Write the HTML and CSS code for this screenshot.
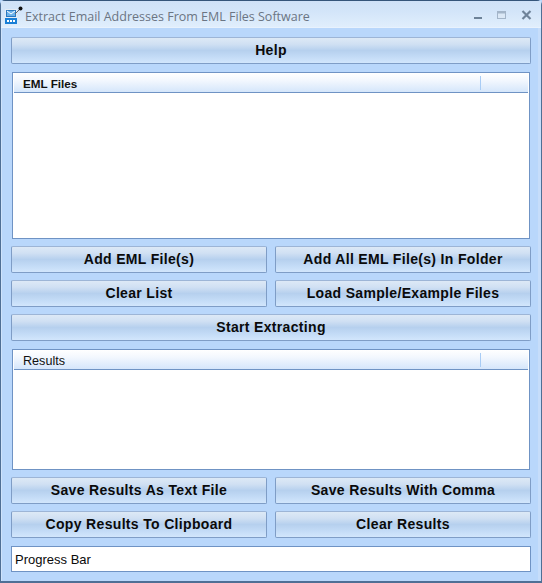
FILE: index.html
```html
<!DOCTYPE html>
<html lang="en">
<head>
    <meta charset="UTF-8">
    <title>Extract Email Addresses From EML Files Software</title>
    <link rel="stylesheet" href="styles.css">
</head>
<body>
    <div class="window">
        <div class="title-bar">
            <svg class="app-icon" width="18" height="20" viewBox="0 0 18 20">
                <rect x="0" y="4" width="12" height="15" fill="#e4ebf4"/>
                <rect x="0" y="13" width="12" height="6" fill="#1a7fd6"/>
                <rect x="1.500" y="5.500" width="9" height="6" fill="#6db2ea" stroke="#2a78c0"/>
                <path d="M2 6l4 3 4-3" fill="none" stroke="#fff"/>
                <path d="M2 16h8" stroke="#fff" stroke-width="2" stroke-dasharray="2 1"/>
                <path d="M10 9l5-5" stroke="#666" stroke-width="1"/>
                <circle cx="15.500" cy="3.500" r="2" fill="#111"/>
            </svg>
            <span class="title-text">Extract Email Addresses From EML Files Software</span>
            <div class="window-controls">
                <svg width="10" height="10" viewBox="0 0 10 10"><rect x="1" y="7" width="8" height="2" fill="#6d8298"/></svg>
                <svg width="10" height="10" viewBox="0 0 10 10"><rect x="0.500" y="1.500" width="8" height="7" fill="#dbe8f6" stroke="#a3b5c9"/><rect x="0.500" y="1.500" width="8" height="2" fill="#a3b5c9"/></svg>
                <svg width="11" height="10" viewBox="0 0 11 10"><path d="M1.500 1l8 8M9.500 1l-8 8" stroke="#6f8399" stroke-width="2.200"/></svg>
            </div>
        </div>

        <div class="client">
            <button class="btn">Help</button>

            <div class="list-box list-files">
                <div class="list-header">
                    <span class="col-name col-bold">EML Files</span>
                </div>
            </div>

            <div class="btn-row">
                <button class="btn">Add EML File(s)</button>
                <button class="btn">Add All EML File(s) In Folder</button>
            </div>
            <div class="btn-row">
                <button class="btn">Clear List</button>
                <button class="btn">Load Sample/Example Files</button>
            </div>
            <button class="btn">Start Extracting</button>

            <div class="list-box list-results">
                <div class="list-header">
                    <span class="col-name">Results</span>
                </div>
            </div>

            <div class="btn-row">
                <button class="btn">Save Results As Text File</button>
                <button class="btn">Save Results With Comma</button>
            </div>
            <div class="btn-row">
                <button class="btn">Copy Results To Clipboard</button>
                <button class="btn">Clear Results</button>
            </div>

            <div class="progress">Progress Bar</div>
        </div>
    </div>
</body>
</html>
```

FILE: styles.css
```css
* {
    box-sizing: border-box;
    margin: 0;
    padding: 0;
}

body {
    width: 542px;
    height: 583px;
    overflow: hidden;
    background-color: #b9d7fb;
    font-family: "Liberation Sans", Arial, sans-serif;
}

.window {
    height: 583px;
    display: flex;
    flex-direction: column;
    border: 1px solid #4f6f95;
    border-top-color: #35557a;
    border-bottom-width: 2px;
    border-radius: 5px 5px 0 0;
    background-color: #b9d7fb;
}

.title-bar {
    height: 27px;
    flex-shrink: 0;
    display: flex;
    align-items: center;
    padding: 5px 0 0 4px;
    background: linear-gradient(to bottom, #cfe1f7 0%, #d3e5f9 40%, #e0eefc 100%);
    border-bottom: 1px solid #e8f2fd;
}

.app-icon {
    margin-right: 2px;
    margin-top: -3px;
}

.title-text {
    font-family: "Open Sans", sans-serif;
    font-size: 12.5px;
    color: #6b7583;
}

.window-controls {
    margin-left: auto;
    margin-top: -3px;
    display: flex;
    align-items: center;
    gap: 14px;
    padding-right: 9px;
}

.client {
    flex: 1;
    display: flex;
    flex-direction: column;
    padding: 9px 7px 0 9px;
    border-left: 1px solid #cfe3fb;
    border-right: 3px solid #c6ddfa;
}

.btn {
    display: block;
    width: 100%;
    height: 27px;
    flex-shrink: 0;
    padding-bottom: 2px;
    border: 1px solid #7f9dc6;
    border-top-color: #9db5d6;
    border-radius: 2px;
    background: linear-gradient(to bottom, #dde9f6 0%, #d0e0f3 25%, #b6d0ee 50%, #c3dbf6 75%, #d2e6fc 100%);
    color: #0a0a0a;
    font-family: "Liberation Sans", Arial, sans-serif;
    font-size: 14px;
    font-weight: bold;
    letter-spacing: 0.33px;
    text-align: center;
}

.btn-row {
    display: grid;
    grid-template-columns: 1fr 1fr;
    gap: 8px;
    margin-bottom: 7px;
}

.list-box {
    margin: 8px 1px 7px;
    background-color: #fff;
    border: 1px solid #6f93c4;
}

.list-files {
    height: 167px;
}

.list-results {
    height: 121px;
}

.list-header {
    height: 20px;
    margin: 0 1px;
    display: flex;
    align-items: center;
    background: linear-gradient(to bottom, #fff 0%, #f2f7fe 40%, #d5e6fb 100%);
    border-bottom: 1px solid #6f93c4;
    color: #111;
}

.col-name {
    width: 467px;
    height: 14px;
    padding-left: 9px;
    border-right: 1px solid #a8ccf5;
    font-size: 12.6px;
    line-height: 17px;
}

.col-bold {
    font-size: 11.7px;
    font-weight: bold;
    line-height: 15px;
}

.progress {
    height: 26px;
    margin-top: 1px;
    padding-left: 3px;
    background-color: #fff;
    border: 1px solid #6f93c4;
    font-size: 13px;
    line-height: 25px;
    color: #0a0a0a;
}
```
